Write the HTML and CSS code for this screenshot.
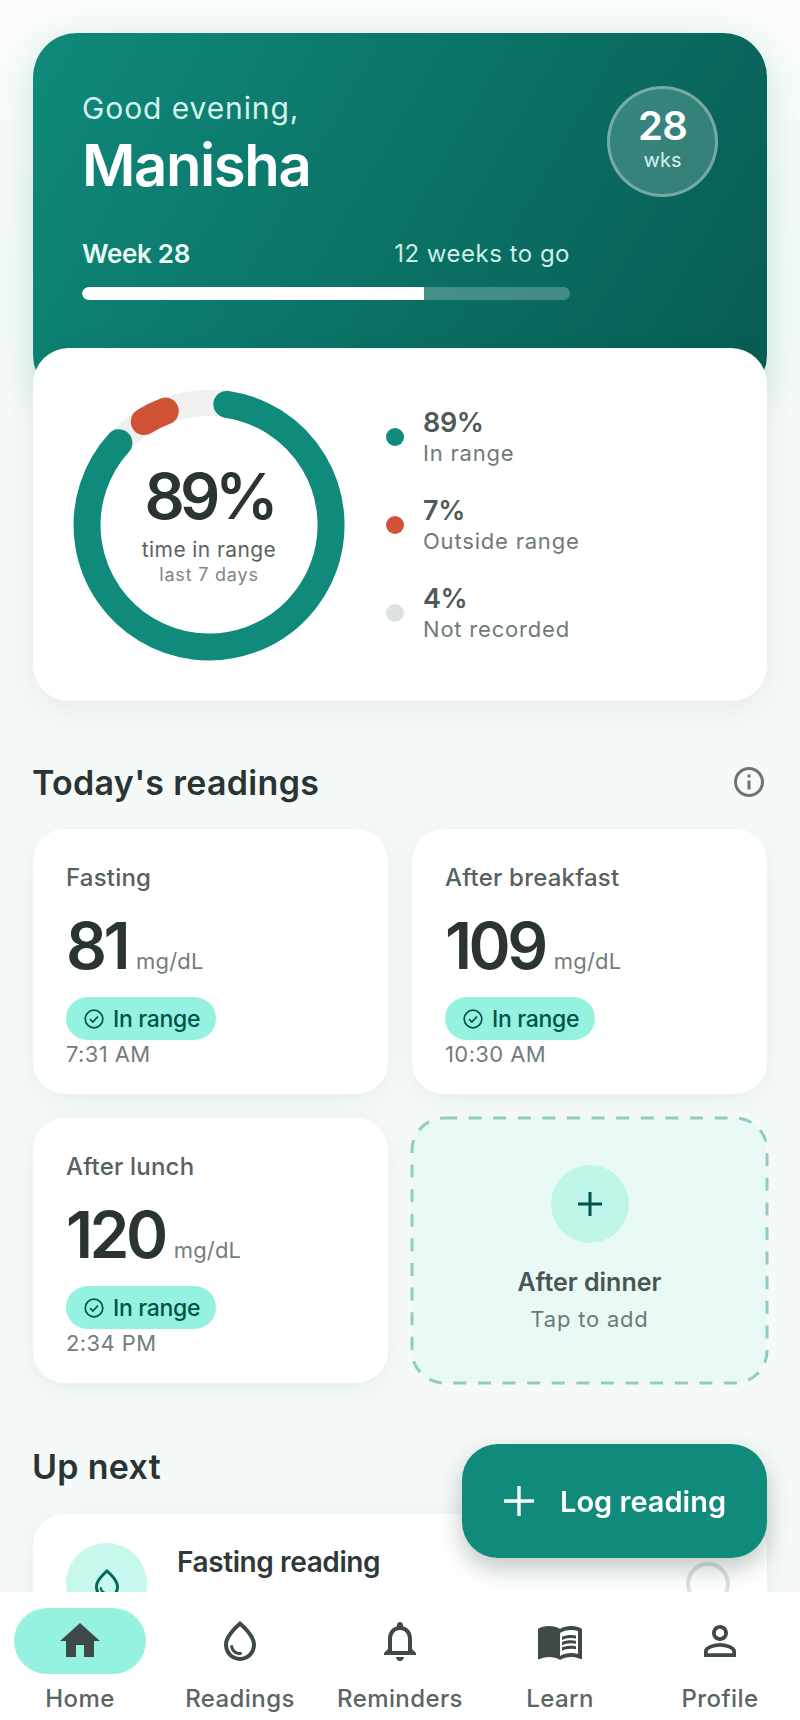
FILE: index.html
```html
<!DOCTYPE html>
<html lang="en">
<head>
    <meta charset="UTF-8">
    <meta name="viewport" content="width=device-width, initial-scale=1.0">
    <title>Home</title>
    <link rel="stylesheet" href="styles.css">
</head>
<body>
    <div class="page">
        <!-- Greeting -->
        <section class="hero">
            <div class="hero-top">
                <div>
                    <div class="greeting">Good evening,</div>
                    <div class="name">Manisha</div>
                </div>
                <div class="week-badge">
                    <span class="week-num">28</span>
                    <span class="week-unit">wks</span>
                </div>
            </div>
            <div class="progress-block">
                <div class="progress-labels">
                    <span class="progress-week">Week 28</span>
                    <span class="progress-left">12 weeks to go</span>
                </div>
                <div class="progress-track"><div class="progress-fill" style="width: 70%"></div></div>
            </div>
        </section>

        <!-- Time in range -->
        <section class="range-card">
            <div class="donut">
                <svg width="270" height="270" viewBox="0 0 270 270">
                    <circle cx="135" cy="135" r="122" fill="none" stroke="#eef1f0" stroke-width="26"/>
                    <path d="M152.8 14.3A122 122 0 1 1 44.9 52.8" fill="none" stroke="#0f8a7b" stroke-width="27" stroke-linecap="round"/>
                    <path d="M70.3 31.5A122 122 0 0 1 91.3 21.1" fill="none" stroke="#d05337" stroke-width="27" stroke-linecap="round"/>
                </svg>
                <div class="donut-text">
                    <div class="donut-value">89%</div>
                    <div class="donut-label">time in range</div>
                    <div class="donut-sub">last 7 days</div>
                </div>
            </div>
            <ul class="legend">
                <li class="legend-item">
                    <span class="dot dot-green"></span>
                    <div><div class="legend-value">89%</div><div class="legend-label">In range</div></div>
                </li>
                <li class="legend-item">
                    <span class="dot dot-red"></span>
                    <div><div class="legend-value">7%</div><div class="legend-label">Outside range</div></div>
                </li>
                <li class="legend-item">
                    <span class="dot dot-grey"></span>
                    <div><div class="legend-value">4%</div><div class="legend-label">Not recorded</div></div>
                </li>
            </ul>
        </section>

        <!-- Readings -->
        <div class="section-head">
            <h2 class="section-title">Today's readings</h2>
            <svg class="info-icon" width="36" height="36" viewBox="0 0 24 24"><path d="M11 7h2v2h-2zm0 4h2v6h-2zm1-9C6.48 2 2 6.48 2 12s4.48 10 10 10 10-4.48 10-10S17.52 2 12 2zm0 18c-4.41 0-8-3.59-8-8s3.59-8 8-8 8 3.59 8 8-3.59 8-8 8z"/></svg>
        </div>

        <div class="readings">
            <div class="reading-card">
                <div class="reading-label">Fasting</div>
                <div class="reading-value"><span class="reading-num">81</span><span class="reading-unit">mg/dL</span></div>
                <span class="pill">
                    <svg width="22" height="22" viewBox="0 0 22 22"><circle cx="11" cy="11" r="8.8" fill="none" stroke="#00524a" stroke-width="1.7"/><path d="M7 11.2l2.9 2.9 5.1-5.6" fill="none" stroke="#00524a" stroke-width="1.7"/></svg>
                    In range
                </span>
                <div class="reading-time">7:31 AM</div>
            </div>
            <div class="reading-card">
                <div class="reading-label">After breakfast</div>
                <div class="reading-value"><span class="reading-num">109</span><span class="reading-unit">mg/dL</span></div>
                <span class="pill">
                    <svg width="22" height="22" viewBox="0 0 22 22"><circle cx="11" cy="11" r="8.8" fill="none" stroke="#00524a" stroke-width="1.7"/><path d="M7 11.2l2.9 2.9 5.1-5.6" fill="none" stroke="#00524a" stroke-width="1.7"/></svg>
                    In range
                </span>
                <div class="reading-time">10:30 AM</div>
            </div>
            <div class="reading-card">
                <div class="reading-label">After lunch</div>
                <div class="reading-value"><span class="reading-num">120</span><span class="reading-unit">mg/dL</span></div>
                <span class="pill">
                    <svg width="22" height="22" viewBox="0 0 22 22"><circle cx="11" cy="11" r="8.8" fill="none" stroke="#00524a" stroke-width="1.7"/><path d="M7 11.2l2.9 2.9 5.1-5.6" fill="none" stroke="#00524a" stroke-width="1.7"/></svg>
                    In range
                </span>
                <div class="reading-time">2:34 PM</div>
            </div>
            <div class="add-card">
                <svg class="add-border" width="355" height="265" viewBox="0 0 355 265"><rect x="0" y="0" width="355" height="265" rx="32" fill="none" stroke="#92cbbf" stroke-width="3" stroke-dasharray="13 11.6"/></svg>
                <div class="add-circle">
                    <svg width="24" height="24" viewBox="0 0 24 24"><path d="M12 0v24M0 12h24" stroke="#00524a" stroke-width="3" fill="none"/></svg>
                </div>
                <div class="add-title">After dinner</div>
                <div class="add-sub">Tap to add</div>
            </div>
        </div>

        <!-- Up next -->
        <h2 class="section-title upnext-title">Up next</h2>
        <div class="next-card">
            <div class="next-icon">
                <svg width="36" height="36" viewBox="0 0 24 24"><path fill="#00695c" d="M12 2c-5.33 4.55-8 8.48-8 11.8 0 4.98 3.8 8.2 8 8.2s8-3.22 8-8.2c0-3.32-2.67-7.25-8-11.8zm0 18c-3.35 0-6-2.57-6-6.2 0-2.34 1.95-5.44 6-9.14 4.05 3.7 6 6.79 6 9.14 0 3.63-2.65 6.2-6 6.2z"/><path fill="#00695c" d="M7.83 14c.37 0 .67.26.74.62.41 2.22 2.28 2.98 3.64 2.87.43-.02.79.32.79.75 0 .4-.32.73-.72.75-2.13.13-4.62-1.09-5.19-4.12-.08-.45.28-.87.74-.87z"/></svg>
            </div>
            <div class="next-title">Fasting reading</div>
            <div class="next-check"></div>
        </div>
    </div>

    <button class="fab">
        <svg width="30" height="30" viewBox="0 0 30 30"><path d="M15 0v30M0 15h30" stroke="#fff" stroke-width="3.4" fill="none"/></svg>
        Log reading
    </button>

    <nav class="nav">
        <div class="nav-item">
            <div class="nav-icon nav-icon-active">
                <svg width="48" height="48" viewBox="0 0 24 24"><path d="M10 20v-6h4v6h5v-8h3L12 3 2 12h3v8z"/></svg>
            </div>
            <span>Home</span>
        </div>
        <div class="nav-item">
            <div class="nav-icon">
                <svg width="48" height="48" viewBox="0 0 24 24"><path d="M12 2c-5.33 4.55-8 8.48-8 11.8 0 4.98 3.8 8.2 8 8.2s8-3.22 8-8.2c0-3.32-2.67-7.25-8-11.8zm0 18c-3.35 0-6-2.57-6-6.2 0-2.34 1.95-5.44 6-9.14 4.05 3.7 6 6.79 6 9.14 0 3.63-2.65 6.2-6 6.2z"/><path d="M7.83 14c.37 0 .67.26.74.62.41 2.22 2.28 2.98 3.64 2.87.43-.02.79.32.79.75 0 .4-.32.73-.72.75-2.13.13-4.62-1.09-5.19-4.12-.08-.45.28-.87.74-.87z"/></svg>
            </div>
            <span>Readings</span>
        </div>
        <div class="nav-item">
            <div class="nav-icon">
                <svg width="48" height="48" viewBox="0 0 24 24"><path d="M12 22c1.1 0 2-.9 2-2h-4c0 1.1.9 2 2 2zm6-6v-5c0-3.07-1.63-5.64-4.5-6.32V4c0-.83-.67-1.5-1.5-1.5s-1.5.67-1.5 1.5v.68C7.64 5.36 6 7.92 6 11v5l-2 2v1h16v-1l-2-2zm-2 1H8v-6c0-2.48 1.51-4.5 4-4.5s4 2.02 4 4.5v6z"/></svg>
            </div>
            <span>Reminders</span>
        </div>
        <div class="nav-item">
            <div class="nav-icon">
                <svg width="48" height="48" viewBox="0 0 24 24"><path d="M21 5c-1.11-.35-2.33-.5-3.5-.5-1.95 0-4.05.4-5.5 1.5-1.45-1.1-3.55-1.5-5.5-1.5S2.45 4.9 1 6v14.65c0 .25.25.5.5.5.1 0 .15-.05.25-.05C3.1 20.45 5.05 20 6.5 20c1.95 0 4.05.4 5.5 1.5 1.35-.85 3.8-1.5 5.5-1.5 1.65 0 3.35.3 4.75 1.05.1.05.15.05.25.05.25 0 .5-.25.5-.5V6c-.6-.45-1.25-.75-2-1zm0 13.5c-1.1-.35-2.3-.5-3.5-.5-1.7 0-4.15.65-5.5 1.5V8c1.35-.85 3.8-1.5 5.5-1.5 1.2 0 2.4.15 3.5.5v11.5z"/><path d="M17.5 10.5c.88 0 1.73.09 2.5.26V9.24c-.79-.15-1.64-.24-2.5-.24-1.7 0-3.24.29-4.5.83v1.66c1.13-.64 2.7-.99 4.5-.99zM13 12.49v1.66c1.13-.64 2.7-.99 4.5-.99.88 0 1.73.09 2.5.26V11.9c-.79-.15-1.64-.24-2.5-.24-1.7 0-3.24.3-4.5.83zM17.5 14.33c-1.7 0-3.24.29-4.5.83v1.66c1.13-.64 2.7-.99 4.5-.99.88 0 1.73.09 2.5.26v-1.52c-.79-.16-1.64-.24-2.5-.24z"/></svg>
            </div>
            <span>Learn</span>
        </div>
        <div class="nav-item">
            <div class="nav-icon">
                <svg width="48" height="48" viewBox="0 0 24 24"><path d="M12 5.9c1.16 0 2.1.94 2.1 2.1s-.94 2.1-2.1 2.1S9.9 9.16 9.9 8s.94-2.1 2.1-2.1m0 9c2.97 0 6.1 1.46 6.1 2.1v1.1H5.9V17c0-.64 3.13-2.1 6.1-2.1M12 4C9.79 4 8 5.79 8 8s1.79 4 4 4 4-1.79 4-4-1.79-4-4-4zm0 9c-2.67 0-8 1.34-8 4v3h16v-3c0-2.66-5.33-4-8-4z"/></svg>
            </div>
            <span>Profile</span>
        </div>
    </nav>
</body>
</html>
```
FILE: styles.css
```css
* {
    box-sizing: border-box;
}
html, body {
    height: 1720px;
    overflow: hidden;
}
body {
    margin: 0;
    font-family: Inter, "Liberation Sans", sans-serif;
    background: linear-gradient(180deg, #fbfdfc 0, #f5faf8 260px);
    color: #2a3432;
}
.page {
    padding: 33px 33px 0;
}

/* Hero */
.hero {
    height: 366px;
    padding: 53px 49px 0;
    border-radius: 44px;
    background: linear-gradient(120deg, #0f8a7b 0%, #075b52 100%);
    box-shadow: 0 8px 40px rgba(15, 138, 123, 0.2);
    color: white;
}
.hero-top {
    display: flex;
    justify-content: space-between;
}
.greeting {
    margin-top: 4px;
    font-size: 30px;
    line-height: 36px;
    letter-spacing: 0.9px;
    color: #d3f3ec;
}
.name {
    margin-top: 4px;
    font-size: 58px;
    line-height: 70px;
    font-weight: 600;
    letter-spacing: -1.4px;
}
.week-badge {
    width: 111px;
    height: 111px;
    padding-bottom: 8px;
    border-radius: 50%;
    background: rgba(255, 255, 255, 0.18);
    border: 3px solid rgba(255, 255, 255, 0.32);
    display: flex;
    flex-direction: column;
    align-items: center;
    justify-content: center;
}
.week-num {
    font-size: 40px;
    line-height: 44px;
    font-weight: 600;
    letter-spacing: -0.8px;
}
.week-unit {
    font-size: 20px;
    line-height: 24px;
    color: #d8f2ec;
}
.progress-block {
    width: 488px;
    margin-top: 35px;
}
.progress-labels {
    display: flex;
    justify-content: space-between;
    align-items: center;
    height: 36px;
}
.progress-week {
    font-size: 26px;
    font-weight: 600;
    letter-spacing: -0.3px;
    color: #eafaf6;
}
.progress-left {
    font-size: 24px;
    letter-spacing: 0.5px;
    color: #cdeee7;
}
.progress-track {
    height: 13px;
    margin-top: 16px;
    border-radius: 7px;
    background: rgba(255, 255, 255, 0.24);
    overflow: hidden;
}
.progress-fill {
    height: 100%;
    background: white;
    border-radius: 7px 0 0 7px;
}

/* Time in range */
.range-card {
    position: relative;
    display: flex;
    align-items: center;
    height: 353px;
    margin-top: -51px;
    padding-left: 41px;
    background: white;
    border-radius: 36px;
    box-shadow: 0 10px 30px rgba(30, 70, 60, 0.08);
}
.donut {
    position: relative;
    width: 270px;
    height: 270px;
    flex: none;
}
.donut svg {
    display: block;
    overflow: visible;
}
.donut-text {
    position: absolute;
    inset: 0;
    display: flex;
    flex-direction: column;
    align-items: center;
    justify-content: center;
    padding-bottom: 2px;
}
.donut-value {
    height: 73px;
    font-size: 63px;
    line-height: 70px;
    font-weight: 600;
    letter-spacing: -5px;
}
.donut-label {
    margin-top: 3px;
    font-size: 21px;
    line-height: 26px;
    letter-spacing: 0.4px;
    color: #596462;
}
.donut-sub {
    font-size: 18px;
    line-height: 24px;
    letter-spacing: 0.8px;
    color: #7c8684;
}
.legend {
    list-style: none;
    margin: 0 0 0 42px;
    padding: 0;
}
.legend-item {
    display: flex;
    align-items: center;
    gap: 19px;
    height: 88px;
}
.dot {
    width: 18px;
    height: 18px;
    border-radius: 50%;
}
.dot-green { background: #0f8a7b; }
.dot-red { background: #d05337; }
.dot-grey { background: #d9e4e1; }
.legend-value {
    font-size: 27px;
    line-height: 32px;
    font-weight: 600;
    letter-spacing: -0.4px;
    color: #4f5a58;
}
.legend-label {
    font-size: 22px;
    line-height: 28px;
    letter-spacing: 0.8px;
    color: #707a78;
}

/* Readings */
.section-head {
    display: flex;
    justify-content: space-between;
    align-items: center;
    margin-top: 60px;
    height: 44px;
}
.section-title {
    margin: 0 0 0 -1px;
    font-size: 34px;
    line-height: 44px;
    font-weight: 600;
    letter-spacing: 0.3px;
    color: #2a3432;
}
.info-icon {
    fill: #6b7573;
    margin: -2px 0 0 0;
}
.readings {
    display: grid;
    grid-template-columns: 355px 355px;
    grid-auto-rows: 265px;
    gap: 24px;
    margin-top: 24px;
}
.reading-card {
    padding: 32px 33px 0;
    background: white;
    border-radius: 32px;
    box-shadow: 0 6px 24px rgba(30, 70, 60, 0.07);
}
.reading-label {
    font-size: 24px;
    line-height: 34px;
    font-weight: 500;
    letter-spacing: 0.2px;
    color: #566160;
}
.reading-value {
    display: flex;
    align-items: baseline;
    gap: 9px;
    margin-top: 12px;
    height: 78px;
}
.reading-num {
    font-size: 64px;
    line-height: 78px;
    font-weight: 600;
    letter-spacing: -3.5px;
    color: #2a3432;
}
.reading-unit {
    font-size: 22px;
    letter-spacing: 0.2px;
    color: #737d7b;
}
.pill {
    display: inline-flex;
    align-items: center;
    gap: 8px;
    height: 43px;
    margin-top: 12px;
    padding: 0 16px 0 17px;
    border-radius: 22px;
    background: #96f2e0;
    color: #00524a;
    font-size: 23px;
    font-weight: 500;
    letter-spacing: -0.3px;
}
.reading-time {
    font-size: 22px;
    line-height: 28px;
    letter-spacing: 0.4px;
    color: #737d7b;
}
.add-card {
    position: relative;
    display: flex;
    flex-direction: column;
    align-items: center;
    padding-top: 47px;
    background: #e9faf6;
    border-radius: 32px;
}
.add-border {
    position: absolute;
    left: 0;
    top: 0;
    overflow: visible;
}
.add-circle {
    display: flex;
    align-items: center;
    justify-content: center;
    width: 78px;
    height: 78px;
    border-radius: 50%;
    background: #c0f5ea;
}
.add-title {
    margin-top: 22px;
    font-size: 25px;
    line-height: 34px;
    font-weight: 600;
    color: #4a5553;
}
.add-sub {
    margin-top: 4px;
    font-size: 22px;
    line-height: 32px;
    letter-spacing: 0.8px;
    color: #6f7a78;
}

/* Up next */
.upnext-title {
    margin-top: 62px;
}
.next-card {
    display: flex;
    align-items: flex-start;
    height: 160px;
    margin-top: 25px;
    padding: 29px 33px 0;
    background: white;
    border-radius: 32px;
    box-shadow: 0 6px 24px rgba(30, 70, 60, 0.07);
}
.next-icon {
    display: flex;
    align-items: center;
    justify-content: center;
    flex: none;
    width: 81px;
    height: 81px;
    border-radius: 50%;
    background: #c8f7ed;
}
.next-title {
    margin-left: 30px;
    margin-top: -1px;
    font-size: 28px;
    line-height: 40px;
    font-weight: 600;
    letter-spacing: -0.4px;
    color: #2f3a38;
}
.next-check {
    flex: none;
    width: 44px;
    height: 44px;
    margin: 19px 4px 0 auto;
    border: 4px solid #d9e4e1;
    border-radius: 50%;
}

/* Floating button */
.fab {
    position: fixed;
    left: 462px;
    top: 1444px;
    display: flex;
    align-items: center;
    gap: 26px;
    width: 305px;
    height: 114px;
    padding: 0 0 0 42px;
    border: none;
    border-radius: 36px;
    background: #0f8a7b;
    box-shadow: 0 10px 24px rgba(20, 50, 45, 0.28);
    color: white;
    font-family: inherit;
    font-size: 29px;
    font-weight: 600;
}

/* Bottom nav */
.nav {
    position: fixed;
    left: 0;
    right: 0;
    bottom: 0;
    display: flex;
    height: 128px;
    background: white;
}
.nav-item {
    flex: 1;
    display: flex;
    flex-direction: column;
    align-items: center;
    padding-top: 16px;
    font-size: 24px;
    line-height: 34px;
    font-weight: 500;
    letter-spacing: 0.4px;
    color: #5a6563;
}
.nav-icon {
    display: flex;
    align-items: center;
    justify-content: center;
    width: 132px;
    height: 66px;
    margin-bottom: 8px;
    border-radius: 33px;
    fill: #3f4a48;
}
.nav-icon-active {
    background: #96f2e0;
}
```
